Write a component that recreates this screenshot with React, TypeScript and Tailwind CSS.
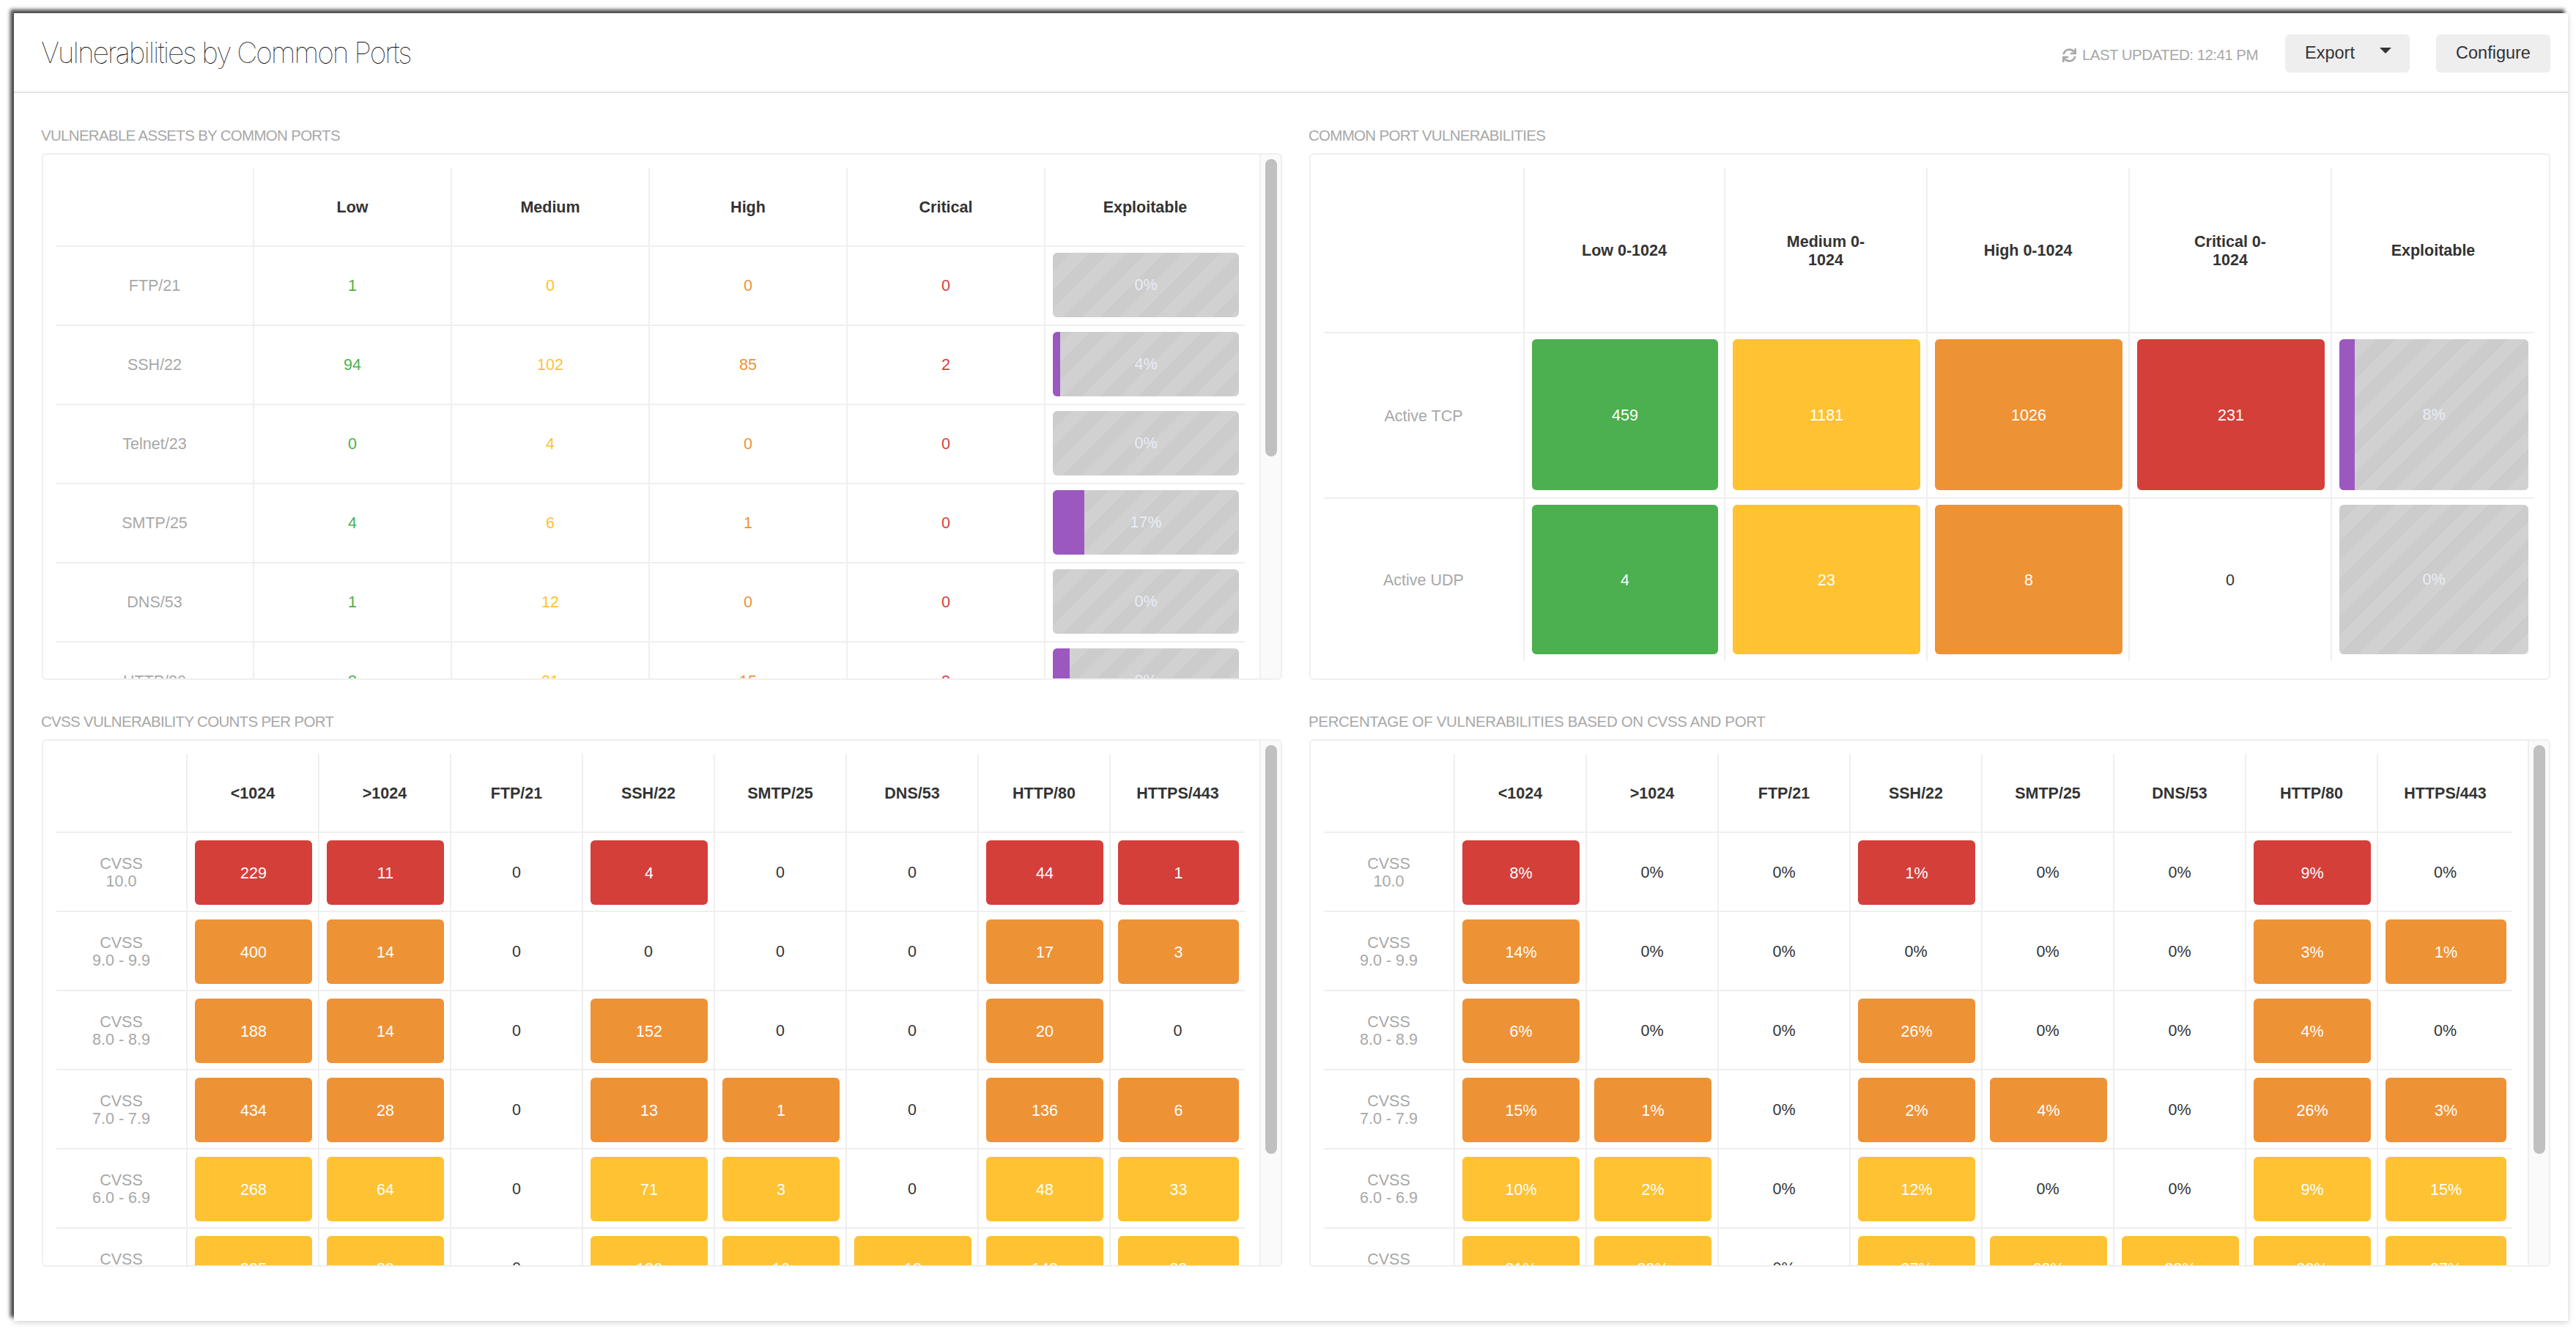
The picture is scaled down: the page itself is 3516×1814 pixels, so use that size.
import React from 'react';
import { FaSync } from 'react-icons/fa';

type Tone = 'g' | 'y' | 'o' | 'r';
type HeatValue = [string, Tone?];

const tones: Record<Tone, string> = {
  g: 'bg-[#4caf50]',
  y: 'bg-[#fec233]',
  o: 'bg-[#ee9236]',
  r: 'bg-[#d43f3a]',
};

const assetRows = [
  { name: 'FTP/21', low: 1, medium: 0, high: 0, critical: 0, pct: 0 },
  { name: 'SSH/22', low: 94, medium: 102, high: 85, critical: 2, pct: 4 },
  { name: 'Telnet/23', low: 0, medium: 4, high: 0, critical: 0, pct: 0 },
  { name: 'SMTP/25', low: 4, medium: 6, high: 1, critical: 0, pct: 17 },
  { name: 'DNS/53', low: 1, medium: 12, high: 0, critical: 0, pct: 0 },
  { name: 'HTTP/80', low: 8, medium: 21, high: 15, critical: 8, pct: 9 },
];

const cvssHeaders = ['<1024', '>1024', 'FTP/21', 'SSH/22', 'SMTP/25', 'DNS/53', 'HTTP/80', 'HTTPS/443'];
const cvssLabels = ['10.0', '9.0 - 9.9', '8.0 - 8.9', '7.0 - 7.9', '6.0 - 6.9', '5.0 - 5.9'];

const cvssCounts: HeatValue[][] = [
  [['229', 'r'], ['11', 'r'], ['0'], ['4', 'r'], ['0'], ['0'], ['44', 'r'], ['1', 'r']],
  [['400', 'o'], ['14', 'o'], ['0'], ['0'], ['0'], ['0'], ['17', 'o'], ['3', 'o']],
  [['188', 'o'], ['14', 'o'], ['0'], ['152', 'o'], ['0'], ['0'], ['20', 'o'], ['0']],
  [['434', 'o'], ['28', 'o'], ['0'], ['13', 'o'], ['1', 'o'], ['0'], ['136', 'o'], ['6', 'o']],
  [['268', 'y'], ['64', 'y'], ['0'], ['71', 'y'], ['3', 'y'], ['0'], ['48', 'y'], ['33', 'y']],
  [['835', 'y'], ['89', 'y'], ['0'], ['186', 'y'], ['16', 'y'], ['12', 'y'], ['148', 'y'], ['83', 'y']],
];

const cvssPercents: HeatValue[][] = [
  [['8%', 'r'], ['0%'], ['0%'], ['1%', 'r'], ['0%'], ['0%'], ['9%', 'r'], ['0%']],
  [['14%', 'o'], ['0%'], ['0%'], ['0%'], ['0%'], ['0%'], ['3%', 'o'], ['1%', 'o']],
  [['6%', 'o'], ['0%'], ['0%'], ['26%', 'o'], ['0%'], ['0%'], ['4%', 'o'], ['0%']],
  [['15%', 'o'], ['1%', 'o'], ['0%'], ['2%', 'o'], ['4%', 'o'], ['0%'], ['26%', 'o'], ['3%', 'o']],
  [['10%', 'y'], ['2%', 'y'], ['0%'], ['12%', 'y'], ['0%'], ['0%'], ['9%', 'y'], ['15%', 'y']],
  [['31%', 'y'], ['33%', 'y'], ['0%'], ['37%', 'y'], ['62%', 'y'], ['38%', 'y'], ['33%', 'y'], ['37%', 'y']],
];

const ASSET_GRID = 'grid grid-cols-[270px_270px_270px_270px_270px_272px]';
const PORT_GRID = 'grid grid-cols-[274px_274px_276px_276px_276px_276px]';
const CVSS_GRID = 'grid grid-cols-[179px_repeat(7,180px)_183px]';

const Cell = ({ children, className = '', last = false }: { children?: React.ReactNode; className?: string; last?: boolean }) => (
  <div className={`flex min-w-0 items-center justify-center text-center ${last ? '' : 'border-r-2 border-[#efefef]'} ${className}`}>
    {children}
  </div>
);

const ExploitBar = ({ pct }: { pct: number }) => (
  <div className="relative flex h-full w-full items-center justify-center overflow-hidden rounded-[6px] bg-[repeating-linear-gradient(135deg,#cccccc_0px,#cccccc_18px,#d1d1d1_18px,#d1d1d1_36px)] text-[#e8edf7]">
    <div className="absolute top-0 bottom-0 left-0 bg-[#9b59c0]" style={{ width: `${pct}%` }} />
    <span className="relative">{pct}%</span>
  </div>
);

const HeatCell = ({ value, last, padding }: { value: HeatValue; last?: boolean; padding: string }) => {
  const [text, tone] = value;
  if (!tone) return <Cell last={last} className="pt-[2px] text-[#333333]">{text}</Cell>;
  return (
    <Cell last={last} className={padding}>
      <div className={`flex h-full w-full items-center justify-center rounded-[6px] pt-[2px] text-white ${tones[tone]}`}>{text}</div>
    </Cell>
  );
};

const Scrollbar = ({ thumb }: { thumb: string }) => (
  <div className="w-[29px] shrink-0 border-l-2 border-[#efefef] bg-[#fafafa] pt-[6px] pl-[6px]">
    <div className={`w-[16px] rounded-full bg-[#c0c0c0] ${thumb}`} />
  </div>
);

const Panel = ({ title, height, children, scrollbar, tracking = 'tracking-[-0.7px]' }: { title: string; height: string; children: React.ReactNode; scrollbar?: string; tracking?: string }) => (
  <section className="min-w-0">
    <h2 className={`-ml-px mb-[12px] h-[24px] text-[20.5px] leading-[24px] text-[#a8a8a8] ${tracking}`}>{title}</h2>
    <div className={`flex overflow-hidden rounded-[6px] border-2 border-[#efefef] ${height}`}>
      <div className="min-w-0 flex-1 overflow-hidden pt-[18px] pl-[18px]">{children}</div>
      {scrollbar && <Scrollbar thumb={scrollbar} />}
    </div>
  </section>
);

const Headers = ({ grid, height, labels }: { grid: string; height: string; labels: string[] }) => (
  <div className={`${grid} ${height}`}>
    <Cell />
    {labels.map((label, i) => (
      <Cell key={label} last={i === labels.length - 1} className="pt-[3px] leading-[25px] font-bold whitespace-pre-line text-[#333333]">
        {label}
      </Cell>
    ))}
  </div>
);

const CvssTable = ({ rows }: { rows: HeatValue[][] }) => (
  <div className="w-[1622px]">
    <Headers grid={CVSS_GRID} height="h-[106px]" labels={cvssHeaders} />
    {rows.map((row, r) => (
      <div key={cvssLabels[r]} className={`${CVSS_GRID} h-[108px] border-t-2 border-[#efefef]`}>
        <Cell className="pt-[2px] leading-[24.5px] text-[#a8a8a8]">
          <span>CVSS<br />{cvssLabels[r]}</span>
        </Cell>
        {row.map((value, c) => (
          <HeatCell key={c} value={value} last={c === row.length - 1} padding="pt-[10px] pr-[8px] pb-[8px] pl-[10px]" />
        ))}
      </div>
    ))}
  </div>
);

export default function App() {
  return (
    <div className="min-h-screen bg-white pt-[18px] pl-[19px] font-['Liberation_Sans',sans-serif] text-[21.5px]">
      <div className="h-[1785px] w-[3486px] bg-white shadow-[-5px_-5px_5px_rgba(0,0,0,0.7),0_2px_8px_rgba(0,0,0,0.18)]">
        <header className="flex h-[109px] items-center justify-between border-b-2 border-[#e2e2e2] pt-[2px] pr-[24px] pl-[37px]">
          <h1 className="font-['Inter',sans-serif] text-[39px] font-thin tracking-[-2.08px] text-[#111111]">Vulnerabilities by Common Ports</h1>
          <div className="flex items-center">
            <div className="mt-[6px] flex items-center gap-[8px] text-[20.5px] tracking-[-0.55px] text-[#a8a8a8]">
              <FaSync className="size-[19px]" />
              <span>LAST UPDATED: 12:41 PM</span>
            </div>
            <button className="ml-[37px] flex h-[52px] w-[170px] items-center rounded-[6px] bg-[#eeeeee] pr-[25px] pl-[27px] text-[23.5px] text-[#333333]">
              Export
              <span className="mb-[7px] ml-auto h-0 w-0 border-x-[8px] border-t-[8px] border-x-transparent border-t-[#333333]" />
            </button>
            <button className="ml-[36px] h-[52px] w-[156px] rounded-[6px] bg-[#eeeeee] text-[23.5px] text-[#333333]">Configure</button>
          </div>
        </header>

        <main className="grid grid-cols-[1693px_1694px] gap-x-[37px] gap-y-[45px] pt-[46px] pl-[38px]">
          <Panel title="VULNERABLE ASSETS BY COMMON PORTS" height="h-[719px]" scrollbar="h-[406px]">
            <div className="w-[1622px]">
              <Headers grid={ASSET_GRID} height="h-[106px]" labels={['Low', 'Medium', 'High', 'Critical', 'Exploitable']} />
              {assetRows.map((row) => (
                <div key={row.name} className={`${ASSET_GRID} h-[108px] border-t-2 border-[#efefef]`}>
                  <Cell className="text-[#a8a8a8]">{row.name}</Cell>
                  <Cell className="text-[#4caf50]">{row.low}</Cell>
                  <Cell className="text-[#fec233]">{row.medium}</Cell>
                  <Cell className="text-[#ee9236]">{row.high}</Cell>
                  <Cell className="text-[#d43f3a]">{row.critical}</Cell>
                  <Cell last className="pt-[8px] pr-[8px] pb-[10px] pl-[10px]">
                    <ExploitBar pct={row.pct} />
                  </Cell>
                </div>
              ))}
            </div>
          </Panel>

          <Panel title="COMMON PORT VULNERABILITIES" height="h-[719px]">
            <div className="w-[1652px]">
              <Headers grid={PORT_GRID} height="h-[224px]" labels={['Low 0-1024', 'Medium 0-\n1024', 'High 0-1024', 'Critical 0-\n1024', 'Exploitable']} />
              <div className={`${PORT_GRID} h-[226px] border-t-2 border-[#efefef]`}>
                <Cell className="pt-[2px] text-[#a8a8a8]">Active TCP</Cell>
                <HeatCell value={['459', 'g']} padding="pt-[8px] pr-[8px] pb-[10px] pl-[10px]" />
                <HeatCell value={['1181', 'y']} padding="pt-[8px] pr-[8px] pb-[10px] pl-[10px]" />
                <HeatCell value={['1026', 'o']} padding="pt-[8px] pr-[8px] pb-[10px] pl-[10px]" />
                <HeatCell value={['231', 'r']} padding="pt-[8px] pr-[8px] pb-[10px] pl-[10px]" />
                <Cell last className="pt-[8px] pr-[8px] pb-[10px] pl-[10px]">
                  <ExploitBar pct={8} />
                </Cell>
              </div>
              <div className={`${PORT_GRID} h-[223px] border-t-2 border-[#efefef]`}>
                <Cell className="pt-[2px] text-[#a8a8a8]">Active UDP</Cell>
                <HeatCell value={['4', 'g']} padding="pt-[8px] pr-[8px] pb-[9px] pl-[10px]" />
                <HeatCell value={['23', 'y']} padding="pt-[8px] pr-[8px] pb-[9px] pl-[10px]" />
                <HeatCell value={['8', 'o']} padding="pt-[8px] pr-[8px] pb-[9px] pl-[10px]" />
                <HeatCell value={['0']} padding="" />
                <Cell last className="pt-[8px] pr-[8px] pb-[9px] pl-[10px]">
                  <ExploitBar pct={0} />
                </Cell>
              </div>
            </div>
          </Panel>

          <Panel title="CVSS VULNERABILITY COUNTS PER PORT" height="h-[720px]" scrollbar="h-[558px]">
            <CvssTable rows={cvssCounts} />
          </Panel>

          <Panel title="PERCENTAGE OF VULNERABILITIES BASED ON CVSS AND PORT" height="h-[720px]" scrollbar="h-[558px]" tracking="tracking-[-0.35px]">
            <CvssTable rows={cvssPercents} />
          </Panel>
        </main>
      </div>
    </div>
  );
}
